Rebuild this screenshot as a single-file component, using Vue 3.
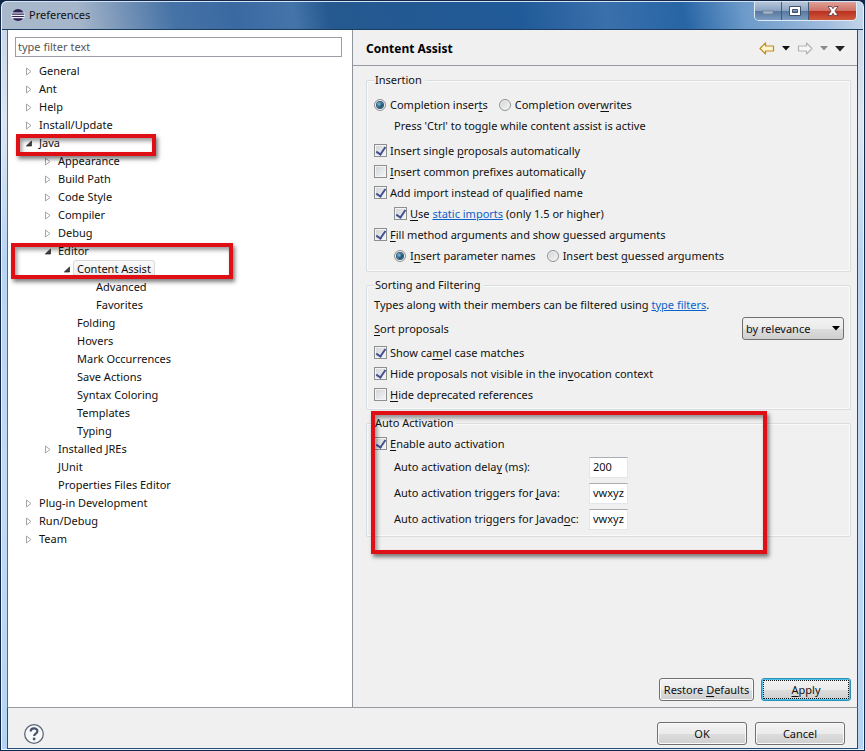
<script setup>
import { ref } from 'vue'

const filter = ref('')
const tree = [
  { label: 'General', level: 0, state: 'closed' },
  { label: 'Ant', level: 0, state: 'closed' },
  { label: 'Help', level: 0, state: 'closed' },
  { label: 'Install/Update', level: 0, state: 'closed' },
  { label: 'Java', level: 0, state: 'open' },
  { label: 'Appearance', level: 1, state: 'closed' },
  { label: 'Build Path', level: 1, state: 'closed' },
  { label: 'Code Style', level: 1, state: 'closed' },
  { label: 'Compiler', level: 1, state: 'closed' },
  { label: 'Debug', level: 1, state: 'closed' },
  { label: 'Editor', level: 1, state: 'open' },
  { label: 'Content Assist', level: 2, state: 'open', selected: true },
  { label: 'Advanced', level: 3 },
  { label: 'Favorites', level: 3 },
  { label: 'Folding', level: 2 },
  { label: 'Hovers', level: 2 },
  { label: 'Mark Occurrences', level: 2 },
  { label: 'Save Actions', level: 2 },
  { label: 'Syntax Coloring', level: 2 },
  { label: 'Templates', level: 2 },
  { label: 'Typing', level: 2 },
  { label: 'Installed JREs', level: 1, state: 'closed' },
  { label: 'JUnit', level: 1 },
  { label: 'Properties Files Editor', level: 1 },
  { label: 'Plug-in Development', level: 0, state: 'closed' },
  { label: 'Run/Debug', level: 0, state: 'closed' },
  { label: 'Team', level: 0, state: 'closed' },
]

const completion = ref('inserts')
const guess = ref('names')
const single = ref(true)
const prefixes = ref(false)
const addImport = ref(true)
const useStatic = ref(true)
const fill = ref(true)
const camel = ref(true)
const hideInvisible = ref(true)
const hideDeprecated = ref(false)
const auto = ref(true)
const sort = ref('relevance')
const delay = ref('200')
const javaTriggers = ref('vwxyz')
const docTriggers = ref('vwxyz')
</script>

<template>
  <div class="window">
    <header class="titlebar">
      <svg class="logo" width="14" height="14" viewBox="0 0 14 14" aria-hidden="true">
        <circle cx="7" cy="7" r="6" fill="#2c2255" />
        <path d="M.5 5h13M0 7.300h14M.5 9.600h13" stroke="#f1eff8" stroke-width="1.200" />
      </svg>
      <h1>Preferences</h1>
      <div class="caption">
        <button class="min" aria-label="Minimize" disabled>
          <svg width="12" height="12" viewBox="0 0 12 12"><rect x="1" y="6" width="10" height="3" fill="#a9b9cb" stroke="#71859e" stroke-width="1" /></svg>
        </button>
        <button class="max" aria-label="Maximize">
          <svg width="12" height="12" viewBox="0 0 12 12"><path fill-rule="evenodd" d="M.5 1.500h11v9H.5zM3.500 4.500v3h5v-3z" fill="#fff" stroke="#3e526b" stroke-width="1" /></svg>
        </button>
        <button class="close" aria-label="Close">
          <svg width="14" height="12" viewBox="0 0 14 12"><path d="M2 1.500h3.500L7 3.700 8.500 1.500H12L8.900 6l3.100 4.500H8.500L7 8.300l-1.500 2.200H2L5.100 6z" fill="#fff" stroke="#5b3340" stroke-width=".8" /></svg>
        </button>
      </div>
    </header>

    <main class="body">
      <nav class="side" aria-label="Preference pages">
        <input v-model="filter" class="filter" type="text" placeholder="type filter text" aria-label="Filter" />
        <ul class="tree">
          <li v-for="item in tree" :key="item.label" :class="'level-' + item.level">
            <svg width="13" height="10" viewBox="0 0 13 10" aria-hidden="true">
              <path v-if="item.state === 'closed'" d="M.5 2v7l4.500-3.500z" fill="#fff" stroke="#a6a6a6" />
              <path v-else-if="item.state === 'open'" d="M5.500 3v5H.3z" fill="#404040" stroke="#262626" stroke-width=".7" />
            </svg>
            <span :class="{ selected: item.selected }">{{ item.label }}</span>
          </li>
        </ul>
        <div class="mark mark-java"></div>
        <div class="mark mark-editor"></div>
      </nav>

      <section class="page">
        <div class="page-head">
          <h2>Content Assist</h2>
          <div class="history">
            <button aria-label="Back"><svg width="16" height="13" viewBox="0 0 16 13"><path d="M1 6.500L6.500 1v3H14.500v5H6.500v3z" fill="#fff6cf" stroke="#c08a1e" stroke-width="1.200" stroke-linejoin="round" /></svg></button>
            <button aria-label="Back history"><svg width="8" height="5" viewBox="0 0 8 5"><path d="M0 0h8L4 4.500z" fill="#111" /></svg></button>
            <button aria-label="Forward"><svg width="16" height="13" viewBox="0 0 16 13"><path d="M15 6.500L9.500 1v3H1.500v5h8v3z" fill="#f6f6f6" stroke="#b4b4b4" stroke-width="1.200" stroke-linejoin="round" /></svg></button>
            <button aria-label="Forward history"><svg width="8" height="5" viewBox="0 0 8 5"><path d="M0 0h8L4 4.500z" fill="#8a8a8a" /></svg></button>
            <button aria-label="View menu"><svg width="10" height="6" viewBox="0 0 10 6"><path d="M0 0h10L5 5.500z" fill="#222" /></svg></button>
          </div>
        </div>

        <div class="groups">
          <fieldset>
            <legend>Insertion</legend>
            <div class="row radios">
              <label><input v-model="completion" type="radio" name="completion" value="inserts" /><span>Completion inser<u>t</u>s</span></label>
              <label><input v-model="completion" type="radio" name="completion" value="overwrites" /><span>Completion over<u>w</u>rites</span></label>
            </div>
            <p class="row inset spaced">Press 'Ctrl' to toggle while content assist is active</p>
            <div class="row"><label><input v-model="single" type="checkbox" /><span>Insert single <u>p</u>roposals automatically</span></label></div>
            <div class="row"><label><input v-model="prefixes" type="checkbox" /><span><u>I</u>nsert common prefixes automatically</span></label></div>
            <div class="row"><label><input v-model="addImport" type="checkbox" /><span>Add import instead of qua<u>l</u>ified name</span></label></div>
            <div class="row inset"><input id="static" v-model="useStatic" type="checkbox" /><span><label for="static"><u>U</u>se</label> <a href="#static">static imports</a> (only 1.5 or higher)</span></div>
            <div class="row"><label><input v-model="fill" type="checkbox" /><span><u>F</u>ill method arguments and show guessed arguments</span></label></div>
            <div class="row inset radios">
              <label><input v-model="guess" type="radio" name="guess" value="names" /><span>I<u>n</u>sert parameter names</span></label>
              <label><input v-model="guess" type="radio" name="guess" value="best" /><span>Insert best <u>g</u>uessed arguments</span></label>
            </div>
          </fieldset>

          <fieldset class="sorting">
            <legend>Sorting and Filtering</legend>
            <p class="row">Types along with their members can be filtered using&nbsp;<a href="#filters">type filters</a>.</p>
            <div class="row sort">
              <label for="sort"><span><u>S</u>ort proposals</span></label>
              <div class="combo">
                <select id="sort" v-model="sort">
                  <option value="relevance">by relevance</option>
                  <option value="alpha">alphabetically</option>
                </select>
                <svg width="8" height="5" viewBox="0 0 8 5"><path d="M0 0h8L4 4.500z" fill="#000" /></svg>
              </div>
            </div>
            <div class="row"><label><input v-model="camel" type="checkbox" /><span>Show ca<u>m</u>el case matches</span></label></div>
            <div class="row"><label><input v-model="hideInvisible" type="checkbox" /><span>Hide proposals not visible in the in<u>v</u>ocation context</span></label></div>
            <div class="row"><label><input v-model="hideDeprecated" type="checkbox" /><span><u>H</u>ide deprecated references</span></label></div>
          </fieldset>

          <fieldset class="activation">
            <legend>Auto Activation</legend>
            <div class="row"><label><input v-model="auto" type="checkbox" /><span><u>E</u>nable auto activation</span></label></div>
            <div class="fields">
              <label for="delay"><span>Auto activation dela<u>y</u> (ms):</span></label>
              <input id="delay" v-model="delay" type="text" />
              <label for="java"><span>Auto activation triggers for <u>J</u>ava:</span></label>
              <input id="java" v-model="javaTriggers" type="text" />
              <label for="doc"><span>Auto activation triggers for Javad<u>o</u>c:</span></label>
              <input id="doc" v-model="docTriggers" type="text" />
            </div>
          </fieldset>
          <div class="mark mark-activation"></div>
        </div>

        <div class="page-actions">
          <button class="btn restore">Restore&nbsp;<u>D</u>efaults</button>
          <button class="btn focus"><u>A</u>pply</button>
        </div>
      </section>
    </main>

    <footer class="foot">
      <button class="help" aria-label="Help">
        <svg width="22" height="22" viewBox="0 0 22 22">
          <circle cx="11" cy="11" r="9.300" fill="#f7f8fa" stroke="#5d6878" stroke-width="1.300" />
          <path d="M7.700 8.600C7.700 4.400 14.400 4.500 14.400 8.300c0 2.300-3.200 2.500-3.200 4.700" fill="none" stroke="#47546c" stroke-width="2.200" />
          <circle cx="11.100" cy="16" r="1.400" fill="#47546c" />
        </svg>
      </button>
      <div class="foot-actions">
        <button class="btn">OK</button>
        <button class="btn">Cancel</button>
      </div>
    </footer>
  </div>
</template>

<style>
body {
  margin: 0;
  background: #0d2547;
}
</style>

<style scoped>
* {
  box-sizing: border-box;
}
.window {
  min-height: 100vh;
  display: flex;
  flex-direction: column;
  padding: 0 7px 1px;
  border: 1px solid #14294a;
  border-radius: 7px 7px 0 0;
  background: linear-gradient(180deg, #c3d3e6 0, #dce6f2 120px, #b9d4f1 260px, #c2dbf5 500px, #b4d3f3 100%);
  box-shadow: inset 0 0 0 1px #eaf3fb;
  font: 11px/18px "Noto Sans", "Open Sans", sans-serif;
  color: #111;
}
button,
input,
select {
  font: inherit;
  color: inherit;
  margin: 0;
}
h1,
h2,
p,
ul {
  margin: 0;
  padding: 0;
}
u {
  text-underline-offset: 2px;
}
.titlebar {
  display: flex;
  align-items: center;
  height: 29px;
  margin: 0 -6px;
  padding: 0 6px 2px 9px;
  border-top: 1px solid #d4e3f3;
  border-bottom: 1px solid #1c3c60;
  border-radius: 6px 6px 0 0;
  background: linear-gradient(80deg, #a9b9cb 0, #a5b6cb 9%, #7895b8 14%, #4673a6 20%, #3a69a2 27%, #4474a9 34%, #25598f 38%, #205a98 60%, #3a70ac 70%, #2765a5 79%, #6c9aca 86%, #9ebbdc 95%, #c5d7eb 100%);
}
.logo {
  margin-right: 4px;
}
.titlebar h1 {
  font-size: 11px;
  font-weight: 400;
  flex: 1;
}
.caption {
  display: flex;
  align-self: flex-start;
  border: 1px solid #dfebf6;
  border-top: 0;
  border-radius: 0 0 5px 5px;
  overflow: hidden;
}
.caption button {
  width: 27px;
  height: 18px;
  padding: 0;
  border: 0;
  border-right: 1px solid #42597a;
  display: flex;
  align-items: center;
  justify-content: center;
  background: linear-gradient(#b7c6d9 0 0, #8ba3c1 48%, #56769d 50%, #7c9cc2);
}
.caption .close {
  width: 47px;
  border-right: 0;
  background: linear-gradient(#dfa096, #cf7165 48%, #b92f1f 50%, #cf5a3c);
}
.body {
  flex: 1;
  display: flex;
  border-left: 1px solid #44719c;
  border-right: 1px solid #244f7a;
  background: #f0f0f0;
  margin: 0 -1px;
}
.side {
  position: relative;
  flex: 0 0 345px;
  padding: 7px 10px 0 7px;
  background: #fff;
  border-right: 1px solid #8f949b;
}
.filter {
  display: block;
  width: 100%;
  height: 20px;
  padding: 0 2px 2px;
  border: 1px solid #9a9ca6;
  border-radius: 0;
  background: #fff;
}
.filter::placeholder {
  color: #555;
  opacity: 1;
}
.tree {
  list-style: none;
  padding: 5px 0 0 11px;
}
.tree li {
  display: flex;
  align-items: center;
  height: 18px;
}
.tree span {
  line-height: 16px;
}
.level-1 {
  padding-left: 19px;
}
.level-2 {
  padding-left: 38px;
}
.level-3 {
  padding-left: 57px;
}
.tree .selected {
  margin: 0 -4px;
  padding: 0 3px;
  border: 1px solid #d9d9d9;
  border-radius: 3px;
  background: linear-gradient(#fafafa, #ececec);
}
.mark {
  position: absolute;
  border: 4px solid #e00f16;
  box-shadow: 2px 3px 4px rgba(0, 0, 0, 0.5), inset 2px 3px 4px rgba(0, 0, 0, 0.4);
  pointer-events: none;
}
.mark-java {
  left: 8px;
  top: 104px;
  width: 140px;
  height: 22px;
}
.mark-editor {
  left: 3px;
  top: 213px;
  width: 222px;
  height: 36px;
}
.mark-activation {
  left: 18px;
  right: 90px;
  bottom: -17px;
  height: 143px;
}
.page {
  flex: 1;
  display: flex;
  flex-direction: column;
}
.page-head {
  display: flex;
  align-items: center;
  justify-content: space-between;
  height: 36px;
  padding: 2px 12px 0 13px;
  border-bottom: 1px solid #979ba1;
}
.page-head h2 {
  font-size: 12px;
  font-weight: 700;
  color: #000;
}
.history {
  display: flex;
  align-items: center;
  gap: 7px;
}
.history button,
.help {
  display: flex;
  padding: 0;
  border: 0;
  background: none;
}
.groups {
  position: relative;
  padding: 5px 6px 0 13px;
  display: flex;
  flex-direction: column;
  gap: 4px;
}
fieldset {
  min-width: 0;
  margin: 0;
  padding: 5px 6px 5px 7px;
  border: 1px solid #d9dde0;
  border-radius: 2px;
  box-shadow: inset 0 0 0 1px #fafafa;
}
.sorting {
  padding-top: 0;
  padding-bottom: 4px;
}
.activation {
  padding-top: 1px;
  padding-bottom: 4px;
}
legend {
  padding: 0 3px 0 1px;
  background: #f0f0f0;
}
.row {
  display: flex;
  align-items: center;
  height: 21px;
}
.inset {
  padding-left: 20px;
}
.spaced {
  margin-bottom: 4px;
}
.row > label,
.fields label {
  display: flex;
  align-items: center;
}
.radios {
  gap: 11px;
}
input[type="checkbox"],
input[type="radio"] {
  appearance: none;
  flex: none;
  display: grid;
  place-items: center;
  width: 13px;
  height: 13px;
  margin: 0 3px 0 0;
  border: 1px solid #8e8f8f;
  background: linear-gradient(135deg, #cfd3d8, #f6f6f6);
  box-shadow: inset 0 0 0 1px #f4f4f4;
}
input[type="radio"] {
  border-radius: 50%;
  width: 12px;
  height: 12px;
  margin-right: 4px;
}
input[type="radio"]:checked::before {
  content: "";
  width: 6px;
  height: 6px;
  border-radius: 50%;
  background: radial-gradient(circle at 35% 35%, #7fc4e0, #174a6c 60%);
  box-shadow: 0 0 0 1px #355a78;
}
input[type="checkbox"]:checked::before {
  content: "";
  width: 4px;
  height: 8px;
  margin-top: -2px;
  border: solid #42508f;
  border-width: 0 2px 2px 0;
  transform: rotate(35deg);
}
a {
  color: #0a63c9;
}
.sort {
  height: 27px;
  justify-content: space-between;
}
.combo {
  position: relative;
}
.combo select {
  appearance: none;
  display: block;
  width: 102px;
  height: 23px;
  padding: 0 3px;
  border: 1px solid #707070;
  border-radius: 3px;
  background: linear-gradient(#f3f3f3 0, #ebebeb 50%, #dddddd 51%, #cfcfcf 100%);
}
.combo svg {
  position: absolute;
  right: 4px;
  top: 9px;
  pointer-events: none;
}
.fields {
  display: grid;
  grid-template-columns: 195px 39px;
  grid-auto-rows: 26px;
  align-items: center;
  padding-left: 20px;
}
.fields input {
  height: 21px;
  width: 100%;
  padding: 0 3px 2px;
  border: 1px solid #e3e6eb;
  border-top-color: #abadb3;
  background: #fff;
}
.page-actions {
  display: flex;
  justify-content: flex-end;
  gap: 7px;
  margin-top: auto;
  padding: 0 6px 6px;
}
.btn {
  width: 90px;
  height: 23px;
  padding: 0;
  border: 1px solid #707070;
  border-radius: 3px;
  background: linear-gradient(#f3f3f3 0, #ebebeb 50%, #dddddd 51%, #cfcfcf 100%);
  box-shadow: inset 0 0 0 1px #fafafa;
}
.restore {
  width: 95px;
}
.focus {
  border-color: #2f8fb5;
  box-shadow: inset 0 0 0 1px #49c3ee;
  outline: 1px dotted #111;
  outline-offset: -3px;
}
.foot {
  display: flex;
  align-items: center;
  justify-content: space-between;
  height: 42px;
  margin: 0 -1px;
  padding: 11px 12px 0 15px;
  border: 1px solid #244f7a;
  border-top-color: #979ba1;
  background: #f0f0f0;
}
.foot-actions {
  display: flex;
  gap: 8px;
}
</style>
